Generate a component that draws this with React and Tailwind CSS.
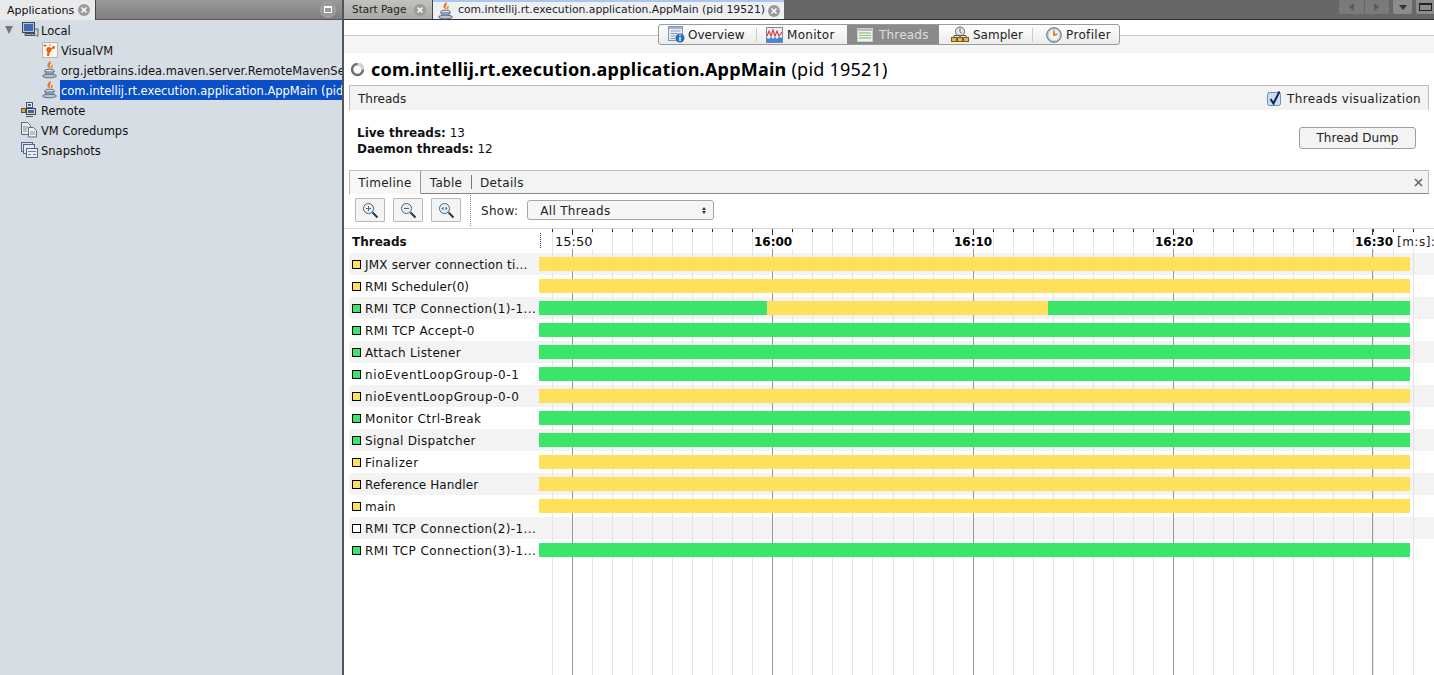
// App.jsx
import React from "react";

const threads = [
  { name: "JMX server connection ti...", dot: "bg-[#ffe05a]", track: "tracking-[0.2px]", bars: [["y", 871]] },
  { name: "RMI Scheduler(0)", dot: "bg-[#ffe05a]", track: "tracking-[0.06px]", bars: [["y", 871]] },
  { name: "RMI TCP Connection(1)-1...", dot: "bg-[#3ae56a]", track: "tracking-[0.42px]", bars: [["g", 228], ["y", 281], ["g", 362]] },
  { name: "RMI TCP Accept-0", dot: "bg-[#3ae56a]", track: "tracking-[0.3px]", bars: [["g", 871]] },
  { name: "Attach Listener", dot: "bg-[#3ae56a]", track: "tracking-[0.33px]", bars: [["g", 871]] },
  { name: "nioEventLoopGroup-0-1", dot: "bg-[#3ae56a]", track: "tracking-[0.6px]", bars: [["g", 871]] },
  { name: "nioEventLoopGroup-0-0", dot: "bg-[#ffe05a]", track: "tracking-[0.6px]", bars: [["y", 871]] },
  { name: "Monitor Ctrl-Break", dot: "bg-[#3ae56a]", track: "tracking-[0.39px]", bars: [["g", 871]] },
  { name: "Signal Dispatcher", dot: "bg-[#3ae56a]", track: "tracking-[0.3px]", bars: [["g", 871]] },
  { name: "Finalizer", dot: "bg-[#ffe05a]", track: "tracking-[0.44px]", bars: [["y", 871]] },
  { name: "Reference Handler", dot: "bg-[#ffe05a]", track: "tracking-[0.1px]", bars: [["y", 871]] },
  { name: "main", dot: "bg-[#ffe05a]", track: "tracking-[0.2px]", bars: [["y", 871]] },
  { name: "RMI TCP Connection(2)-1...", dot: "bg-white", track: "tracking-[0.42px]", bars: [] },
  { name: "RMI TCP Connection(3)-1...", dot: "bg-[#3ae56a]", track: "tracking-[0.42px]", bars: [["g", 871]] },
];

const minorX = Array.from({ length: 44 }, (_, i) => Math.floor(13.5 + i * 20.03) + 0.5);
const majorX = [33.5, 233.5, 434, 634.5, 833.5];

// vertical ruler lines, drawn behind the bars
function GridLines() {
  return (
    <svg className="absolute inset-0 w-full h-full" shapeRendering="crispEdges">
      {minorX.map((x) => (
        <line key={x} x1={x} x2={x} y1="0" y2="100%" stroke="#e4e4e4" />
      ))}
      {majorX.map((x) => (
        <line key={x} x1={x} x2={x} y1="0" y2="100%" stroke="#9a9a9a" />
      ))}
    </svg>
  );
}

function JavaCup() {
  return (
    <svg width="16" height="18" viewBox="0 0 16 18">
      <path d="M8 0c2.500 2.500-2 3.500.5 7.500C4.500 6.500 4.500 3.500 8 0zM10.500 3.500c1 1.500-1 2.500 0 4-2.500-.5-2-2.500 0-4z" fill="#e8761c" />
      <ellipse cx="7.500" cy="10" rx="5" ry="1.800" fill="#dfe3ea" stroke="#59708a" />
      <path d="M3 10c.5 3 1.500 4 4.500 4s4-1 4.500-4" fill="#8da2b8" stroke="#59708a" />
      <ellipse cx="7.500" cy="15" rx="7" ry="1.800" fill="#b9c4d0" stroke="#59708a" />
    </svg>
  );
}

function Computer() {
  return (
    <svg width="18" height="18" viewBox="0 0 18 18">
      <rect x="1.500" y="1.500" width="12" height="10" fill="#b9c5d6" stroke="#3f4650" />
      <rect x="3" y="3" width="9" height="7" fill="#3d68b4" />
      <path d="M4 12.500h10v2h-10z" fill="#a8afb8" stroke="#4a4f56" />
      <path d="M14 8h3v7h-2" fill="#d5d9de" stroke="#5b6068" />
      <rect x="9" y="13" width="2" height="1" fill="#4fc04f" />
    </svg>
  );
}

function VisualVmIcon() {
  return (
    <svg width="16" height="16" viewBox="0 0 16 16">
      <rect x="0.500" y="0.500" width="15" height="15" fill="#fdf6ee" stroke="#b8b4ae" />
      <circle cx="7" cy="7.500" r="2.600" fill="#ea5d18" />
      <circle cx="11.500" cy="5.500" r="1.400" fill="#ea5d18" />
      <circle cx="8" cy="3" r="0.800" fill="#ea5d18" />
      <path d="M5.500 9l-.5 5h2l1-4.500z" fill="#ea5d18" />
      <path d="M8 7l3-1" stroke="#ea5d18" />
      <path d="M3 2v3M1.500 3.500h3" stroke="#ea5d18" />
    </svg>
  );
}

function RemoteIcon() {
  return (
    <svg width="16" height="16" viewBox="0 0 16 16">
      <rect x="5.500" y="0.500" width="6" height="5" fill="#e8ebef" stroke="#555" />
      <rect x="7" y="2" width="3" height="2" fill="#2f62b8" />
      <rect x="5.500" y="6.500" width="9" height="6" fill="#cfd5dc" stroke="#444" />
      <rect x="7" y="8" width="6" height="3" fill="#2f62b8" />
      <rect x="0.500" y="6.500" width="4" height="4" fill="#e9a33c" stroke="#555" />
      <path d="M5 14.500h7" stroke="#555" />
    </svg>
  );
}

function CoredumpIcon() {
  return (
    <svg width="17" height="16" viewBox="0 0 17 16">
      <path d="M0.500 0.500h6l3 3v9h-9z" fill="#e6eaef" stroke="#646b75" />
      <path d="M7.500 5.500h5l3 3v6.500h-8z" fill="#eef1f4" stroke="#646b75" />
      <path d="M2 5h5M2 7h4M2 9h4M9 10h5M9 12h5" stroke="#8b929c" />
    </svg>
  );
}

function SnapshotIcon() {
  return (
    <svg width="17" height="16" viewBox="0 0 17 16">
      <rect x="0.500" y="0.500" width="11" height="9" fill="#dbe2ea" stroke="#4f6a8c" />
      <rect x="2.500" y="2.500" width="11" height="9" fill="#e4e9ee" stroke="#4f6a8c" />
      <rect x="5.500" y="6.500" width="11" height="9" fill="#eef1f4" stroke="#4f6a8c" />
      <path d="M7 9.500h8M7 12.500h3M12 12.500h3" stroke="#6d7f96" />
    </svg>
  );
}

function CloseDot({ className }) {
  return (
    <svg className={className} width="12" height="12" viewBox="0 0 12 12">
      <circle cx="6" cy="6" r="6" fill="#9a9a9a" />
      <path d="M3.500 3.500l5 5M8.500 3.500l-5 5" stroke="#fff" strokeWidth="1.500" />
    </svg>
  );
}

function OverviewIcon() {
  return (
    <svg width="17" height="17" viewBox="0 0 17 17">
      <rect x="0.500" y="0.500" width="14" height="14" fill="#e8edf3" stroke="#7f93ad" />
      <rect x="1" y="1" width="13" height="2" fill="#9fb3cc" />
      <path d="M2.500 5h10M2.500 7.500h7M2.500 10h5M2.500 12.500h5" stroke="#8aa0ba" />
      <circle cx="12" cy="12" r="4.500" fill="#2a6bc2" />
      <path d="M12 11v4M12 8.800v1.200" stroke="#fff" strokeWidth="1.400" />
    </svg>
  );
}

function MonitorIcon() {
  return (
    <svg width="17" height="16" viewBox="0 0 17 16">
      <rect x="0.500" y="0.500" width="16" height="15" fill="#eef2f6" stroke="#7b8796" />
      <path d="M1 15V11l2 1 2-2 2 2 2-2 2 2 2-2 3 1v4z" fill="#3f86dc" />
      <path d="M1 9l2-5 2 5 2-6 2 6 2-5 2 5 3-4" fill="none" stroke="#d8433a" strokeWidth="1.200" />
    </svg>
  );
}

function ThreadsIcon() {
  return (
    <svg width="16" height="14" viewBox="0 0 16 14">
      <rect x="0.500" y="0.500" width="15" height="13" fill="#eef0f2" stroke="#c7ccd2" />
      <rect x="1" y="1" width="14" height="2" fill="#b8bec6" />
      <path d="M2 5h12" stroke="#58c26c" />
      <path d="M2 7.500h12" stroke="#e0a53c" />
      <path d="M2 10h12" stroke="#58c26c" />
    </svg>
  );
}

function SamplerIcon() {
  return (
    <svg width="18" height="17" viewBox="0 0 18 17">
      <circle cx="9" cy="5.500" r="4.500" fill="#dfe5ec" stroke="#5c6a7c" />
      <path d="M9 2.500v3l1.500 2" fill="none" stroke="#c33" />
      <rect x="0.500" y="11.500" width="5" height="4" fill="#eab64a" stroke="#7a5a18" />
      <rect x="6.500" y="11.500" width="5" height="4" fill="#eab64a" stroke="#7a5a18" />
      <rect x="12.500" y="11.500" width="5" height="4" fill="#eab64a" stroke="#7a5a18" />
      <path d="M3 11V9.500h12V11M9 9.500v2" fill="none" stroke="#555" />
    </svg>
  );
}

function ProfilerIcon() {
  return (
    <svg width="16" height="16" viewBox="0 0 16 16">
      <circle cx="8" cy="8" r="7.300" fill="#b9d0e8" stroke="#5c6a7c" />
      <circle cx="8" cy="8" r="5.200" fill="#f8f4ea" />
      <path d="M8 3.500v4.500l3.500-1" fill="none" stroke="#e0781e" strokeWidth="1.800" />
    </svg>
  );
}

function ZoomIcon({ kind }) {
  return (
    <svg width="17" height="17" viewBox="0 0 17 17">
      <circle cx="6.500" cy="6.500" r="5" fill="#e9f1f6" stroke="#4d5f70" />
      <path d="M10.500 10.500l5 5" stroke="#333" strokeWidth="2" />
      {kind === "in" && <path d="M4 6.500h5M6.500 4v5" stroke="#2d6f9f" />}
      {kind === "out" && <path d="M4 6.500h5" stroke="#2d6f9f" />}
      {kind === "fit" && <path d="M3.500 6.500l2-2v4zM9.500 6.500l-2-2v4z" fill="#2d6f9f" />}
    </svg>
  );
}

function ZoomButton({ kind }) {
  return (
    <button className="w-[30px] h-[24px] flex items-center justify-center border border-[#b9b9b9] bg-[#f4f4f4] rounded-[1px]">
      <ZoomIcon kind={kind} />
    </button>
  );
}

function TreeItem({ icon, label, indent, selected }) {
  return (
    <div className={`h-[20px] flex items-center ${indent ? "pl-[42px]" : "pl-[21px]"}`}>
      <span className={`flex shrink-0 ${indent ? "w-[18px]" : "w-[19px]"}`}>{icon}</span>
      <span
        className={`h-[20px] flex items-center whitespace-nowrap pl-px pt-[4px] flex-1 overflow-hidden text-[11.5px] ${
          selected ? "bg-[#0a4fc6] text-white" : "text-[#111]"
        }`}
      >
        {label}
      </span>
    </div>
  );
}

function SubTab({ icon, label, className }) {
  return (
    <div className={`h-full flex items-center shrink-0 ${className}`}>
      {icon}
      <span>{label}</span>
    </div>
  );
}

function ThreadRow({ thread, index }) {
  const striped = index % 2 === 0;
  return (
    <div className={`h-[22px] flex ${striped ? "bg-[#f3f3f3]" : "bg-white"}`}>
      <div className="w-[190px] shrink-0 flex items-center pl-[3px]">
        <span className={`w-[9px] h-[9px] border border-black ${thread.dot}`} />
        <span className={`ml-[4px] pt-[2px] whitespace-nowrap text-[#111] ${thread.track}`}>{thread.name}</span>
      </div>
      <div className="relative flex-1 flex items-center">
        <GridLines />
        {thread.bars.map(([color, width], i) => (
          <div
            key={i}
            className={`relative h-[14px] ${color === "g" ? "bg-[#3ae56a]" : "bg-[#ffe05a]"}`}
            style={{ width }}
          />
        ))}
      </div>
    </div>
  );
}

export default function App() {
  return (
    <div className="w-[1434px] h-[675px] overflow-hidden flex bg-white text-[12px] leading-none font-['DejaVu_Sans',sans-serif]">
      {/* applications panel */}
      <div className="w-[342px] shrink-0 flex flex-col bg-[#d6dde5]">
        <div className="h-[20px] flex bg-gradient-to-b from-[#9a9a9a] to-[#7f7f7f] border-b border-[#555]">
          <div className="w-[96px] h-[20px] flex items-center justify-between pl-[7px] pr-[5px] bg-[#e9eaec] border-r border-[#444] text-[#111] text-[11px]">
            <span>Applications</span>
            <CloseDot />
          </div>
          <div className="flex-1 flex items-center justify-end pr-[6px]">
            <div className="w-[16px] h-[16px] rounded-full bg-[#999] border border-[#a8a8a8] flex items-center justify-center">
              <div className="w-[8px] h-[7px] border border-white border-t-2" />
            </div>
          </div>
        </div>
        <div>
          <div className="h-[20px] flex items-center">
            <svg className="ml-[4px] mr-[7px]" width="10" height="10" viewBox="0 0 10 10">
              <path d="M1 1h8l-4 8z" fill="#777" />
            </svg>
            <span className="w-[20px] flex"><Computer /></span>
            <span className="text-[#111] pt-[4px] text-[11.5px]">Local</span>
          </div>
          <TreeItem indent icon={<VisualVmIcon />} label="VisualVM" />
          <TreeItem indent icon={<JavaCup />} label="org.jetbrains.idea.maven.server.RemoteMavenServer" />
          <TreeItem indent selected icon={<JavaCup />} label="com.intellij.rt.execution.application.AppMain (pid 19521)" />
          <TreeItem icon={<RemoteIcon />} label="Remote" />
          <TreeItem icon={<CoredumpIcon />} label="VM Coredumps" />
          <TreeItem icon={<SnapshotIcon />} label="Snapshots" />
        </div>
      </div>
      <div className="w-[2px] shrink-0 bg-[#555]" />

      {/* main area */}
      <div className="flex-1 min-w-0 flex flex-col">
        <div className="h-[20px] shrink-0 flex bg-[#676767] border-b border-[#333]">
          <div className="w-[89px] flex items-center justify-between pl-[8px] pr-[6px] bg-gradient-to-b from-[#c2c2be] to-[#a9a9a6] border-r border-[#444] text-[#222] text-[10.5px]">
            <span>Start Page</span>
            <CloseDot />
          </div>
          <div className="w-[351px] flex items-center pl-[5px] bg-[#eef0f3] border-t-2 border-[#a9c8ee] text-[#222] text-[10.8px]">
            <JavaCup />
            <span className="ml-[4px] whitespace-nowrap">com.intellij.rt.execution.application.AppMain (pid 19521)</span>
            <CloseDot className="ml-auto mr-[4px]" />
          </div>
          <div className="flex-1 flex justify-end items-start">
            <div className="w-[50px] h-[14px] bg-[#7a7a7a] rounded-b-[2px] flex">
              <span className="flex-1 flex items-center justify-center border-r border-[#666]">
                <span className="w-0 h-0 border-y-[4px] border-y-transparent border-r-[5px] border-r-[#5a5a5a]" />
              </span>
              <span className="flex-1 flex items-center justify-center">
                <span className="w-0 h-0 border-y-[4px] border-y-transparent border-l-[5px] border-l-[#5a5a5a]" />
              </span>
            </div>
            <div className="w-[19px] h-[14px] ml-[4px] bg-[#8c8c8c] rounded-b-[2px] flex items-center justify-center">
              <span className="w-0 h-0 border-x-[4px] border-x-transparent border-t-[5px] border-t-[#333]" />
            </div>
            <div className="w-[18px] h-[14px] ml-[4px] bg-[#8c8c8c] rounded-bl-[2px] flex items-center justify-center">
              <span className="w-[13px] h-[8px] border border-[#222] border-t-2" />
            </div>
          </div>
        </div>

        {/* view switcher */}
        <div className="relative h-[33px] shrink-0 bg-[#f5f5f5]">
          <div className="h-[16px] bg-white border-b border-[#c9c9c9]" />
          <div className="absolute left-[314px] top-[4px] w-[462px] h-[21px] flex items-center border border-[#9a9a9a] rounded-[3px] bg-gradient-to-b from-white to-[#ebebeb] overflow-hidden">
            <SubTab icon={<OverviewIcon />} label="Overview" className="w-[97px] pl-[9px] gap-[3px] text-[#222]" />
            <div className="w-px h-[14px] bg-[#ccc]" />
            <SubTab icon={<MonitorIcon />} label="Monitor" className="w-[90px] pl-[9px] gap-[4px] tracking-[0.3px] text-[#222]" />
            <SubTab icon={<ThreadsIcon />} label="Threads" className="w-[92px] pl-[10px] gap-[6px] tracking-[0.2px] bg-[#8a8a8a] text-[#dedede]" />
            <SubTab icon={<SamplerIcon />} label="Sampler" className="w-[93px] pl-[12px] gap-[4px] text-[#222]" />
            <div className="w-px h-[14px] bg-[#ccc]" />
            <SubTab icon={<ProfilerIcon />} label="Profiler" className="w-[85px] pl-[13px] gap-[4px] tracking-[0.35px] text-[#222]" />
          </div>
        </div>

        <div className="h-[32px] shrink-0 flex items-center pl-[6px]">
          <svg width="15" height="15" viewBox="0 0 16 16">
            <circle cx="8" cy="8" r="5.800" fill="none" stroke="#6e6e6e" strokeWidth="2.600" />
            <path d="M8 2.200a5.800 5.800 0 0 1 5.800 5.800" fill="none" stroke="#d8d8d8" strokeWidth="2.600" />
          </svg>
          <span className="ml-[6px] text-[18px] tracking-[0.23px] text-black whitespace-nowrap font-['Noto_Sans',sans-serif]">
            <b>com.intellij.rt.execution.application.AppMain</b> (pid 19521)
          </span>
        </div>

        <div className="mx-[5px] h-[25px] shrink-0 flex items-center justify-between bg-[#f3f3f3] border-t border-x border-[#bdbdbd] pl-[8px] pr-[7px] text-[#222]">
          <span className="pt-[2px]">Threads</span>
          <label className="flex items-center gap-[5px]">
            <svg width="15" height="15" viewBox="0 0 15 15">
              <rect x="0.500" y="1.500" width="13" height="13" rx="2" fill="#c9dcf3" stroke="#6f8fb8" />
              <path d="M3.500 8l3 4.500 6-12" fill="none" stroke="#0d2550" strokeWidth="2" />
            </svg>
            <span className="pt-[2px] tracking-[0.33px]">Threads visualization</span>
          </label>
        </div>

        <div className="h-[60px] shrink-0 flex justify-between pl-[13px] pr-[18px] pt-[16px] text-[#111]">
          <div className="flex flex-col gap-[4px] pt-px">
            <div><b>Live threads:</b> 13</div>
            <div><b>Daemon threads:</b> 12</div>
          </div>
          <button className="w-[117px] h-[22px] mt-px border border-[#9d9d9d] rounded-[3px] bg-[#f4f4f4] text-[#222]">Thread Dump</button>
        </div>

        {/* inner tabs */}
        <div className="mx-[5px] h-[24px] shrink-0 flex items-center bg-[#f3f3f3] border border-[#bdbdbd] border-b-[#888] text-[#222] tracking-[0.3px]">
          <div className="h-[23px] w-[71px] pt-[2px] flex items-center justify-center bg-[#f7f7f7] border-r border-[#999]">Timeline</div>
          <div className="w-[51px] text-center border-r border-[#777] pt-[2px]">Table</div>
          <div className="pl-[8px] flex-1 pt-[2px]">Details</div>
          <svg className="mr-[5px]" width="9" height="9" viewBox="0 0 9 9">
            <path d="M1 1l7 7M8 1l-7 7" stroke="#666" strokeWidth="1.600" />
          </svg>
        </div>

        <div className="h-[35px] shrink-0 flex items-center pl-[11px] pb-[2px] border-b border-[#d6d6d6]">
          <div className="flex gap-[8px]">
            <ZoomButton kind="in" />
            <ZoomButton kind="out" />
            <ZoomButton kind="fit" />
          </div>
          <div className="ml-[9px] h-[31px] border-l border-dotted border-[#888]" />
          <span className="ml-[10px] pt-[2px] text-[#222] tracking-[0.3px]">Show:</span>
          <div className="ml-[9px] w-[187px] h-[20px] flex items-center justify-between pl-[12px] pr-[7px] border border-[#a5a5a5] rounded-[3px] bg-[#f6f6f6] text-[#222]">
            <span className="pt-[2px] tracking-[0.3px]">All Threads</span>
            <span className="flex flex-col gap-[1px]">
              <span className="w-0 h-0 border-x-[2.500px] border-x-transparent border-b-[3px] border-b-[#333]" />
              <span className="w-0 h-0 border-x-[2.500px] border-x-transparent border-t-[3px] border-t-[#333]" />
            </span>
          </div>
        </div>

        {/* timeline */}
        <div className="flex-1 min-h-0 flex flex-col pl-[5px]">
          <div className="h-[24px] shrink-0 flex">
            <div className="w-[190px] shrink-0 flex items-center pl-[3px] pt-[2px] font-bold text-[#111]">Threads</div>
            <div className="relative flex-1 overflow-hidden">
              <svg className="absolute inset-0 w-full h-full" shapeRendering="crispEdges">
                {minorX.map((x) => (
                  <line key={x} x1={x} x2={x} y1="0" y2="100%" stroke="#e4e4e4" />
                ))}
                {majorX.map((x) => (
                  <line key={x} x1={x} x2={x} y1="0" y2="100%" stroke="#9a9a9a" />
                ))}
                {minorX.map((x) => (
                  <line key={x} x1={x} x2={x} y1="0" y2="3" stroke="#333" />
                ))}
                {majorX.map((x) => (
                  <line key={x} x1={x} x2={x} y1="0" y2="6" stroke="#333" />
                ))}
              </svg>
              <div className="absolute top-[4px] left-px h-[15px] border-l border-dotted border-[#333]" />
              <div className="absolute top-[6px] left-[15px] h-[14px] px-px bg-white text-[13px] leading-[14px] text-[#111]">15:50</div>
              <div className="absolute top-[6px] left-[214px] h-[14px] px-px font-bold bg-white text-[12px] leading-[14px] text-black">16:00</div>
              <div className="absolute top-[6px] left-[414px] h-[14px] px-px font-bold bg-white text-[12px] leading-[14px] text-black">16:10</div>
              <div className="absolute top-[6px] left-[615px] h-[14px] px-px font-bold bg-white text-[12px] leading-[14px] text-black">16:20</div>
              <div className="absolute top-[6px] left-[815px] h-[14px] px-px font-bold bg-white text-[12px] leading-[14px] text-black">16:30</div>
              <div className="absolute top-[6px] left-[858px] h-[14px] bg-white text-[12px] leading-[14px] whitespace-nowrap text-[#222] tracking-[0.5px]">[m:s]:</div>
            </div>
          </div>
          {threads.map((t, i) => (
            <ThreadRow key={i} thread={t} index={i} />
          ))}
          <div className="flex flex-1">
            <div className="w-[190px] shrink-0" />
            <div className="relative flex-1">
              <GridLines />
            </div>
          </div>
        </div>
      </div>
    </div>
  );
}
